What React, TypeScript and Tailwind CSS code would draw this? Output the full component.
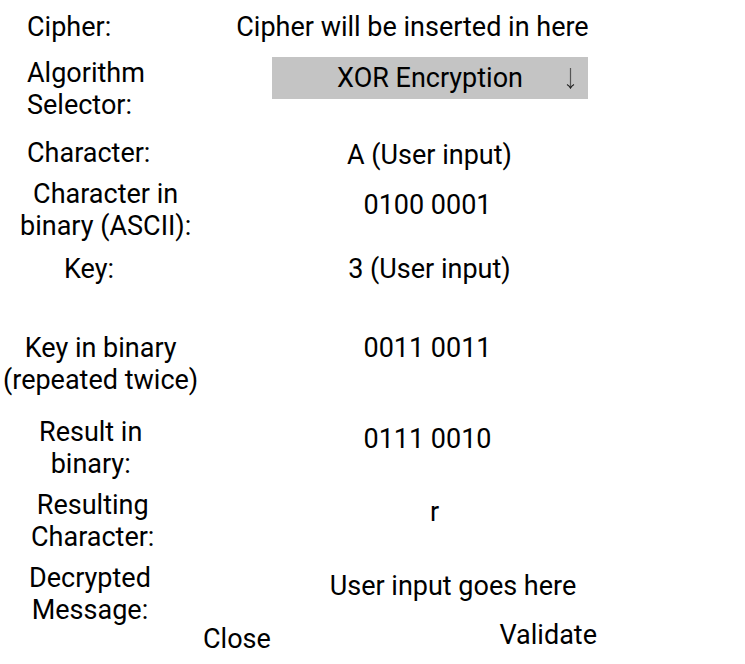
import { useState, type ReactNode } from 'react';

type RowProps = {
  id: string;
  label: string;
  labelClass?: string;
  className?: string;
  valueClass?: string;
  children: ReactNode;
};

function Row({ id, label, labelClass = '', className = '', valueClass = 'pr-[90px]', children }: RowProps) {
  return (
    <div className={`flex items-start ${className}`}>
      <div className="flex w-[200px] shrink-0">
        <label htmlFor={id} className={`whitespace-pre-line ${labelClass}`}>
          {label}
        </label>
      </div>
      <div className={`flex min-w-0 flex-1 justify-center ${valueClass}`}>{children}</div>
    </div>
  );
}

const field = 'block h-8 w-[300px] bg-transparent p-0 text-center leading-8 outline-none';

export default function App() {
  const [algorithm, setAlgorithm] = useState('XOR Encryption');
  const [character, setCharacter] = useState('A (User input)');
  const [key, setKey] = useState('3 (User input)');
  const [message, setMessage] = useState('User input goes here');

  return (
    <form
      className="bg-white pt-[11px] font-['Roboto',sans-serif] text-[27px] leading-8 text-black"
      onSubmit={(e) => e.preventDefault()}
    >
      <Row id="cipher" label="Cipher:" labelClass="pl-[27px]" valueClass="pr-[120px]">
        <output id="cipher" className="whitespace-nowrap">Cipher will be inserted in here</output>
      </Row>

      <Row
        id="algorithm"
        label={'Algorithm\nSelector:'}
        labelClass="pl-[27px]"
        className="mt-3.5"
        valueClass="pr-[85px]"
      >
        <div className="relative w-[316px]">
          <select
            id="algorithm"
            value={algorithm}
            onChange={(e) => setAlgorithm(e.target.value)}
            className="block h-[42px] w-full appearance-none bg-[#c4c4c4] p-0 text-center [text-align-last:center] outline-none"
          >
            <option>XOR Encryption</option>
          </select>
          <svg
            className="pointer-events-none absolute top-[11px] right-3 h-[21px] w-[10px]"
            viewBox="0 0 10 21"
            fill="none"
            stroke="#555"
            aria-hidden="true"
          >
            <path d="M4.5 0V20" strokeWidth="1.2" />
            <path d="M1 16.5C2.5 17.3 3.8 18.5 4.5 20C5.2 18.5 6.5 17.3 8 16.5" stroke="#222" strokeWidth="1.2" />
          </svg>
        </div>
      </Row>

      <Row
        id="character"
        label="Character:"
        labelClass="pl-[27px]"
        className="mt-4"
        valueClass="pr-[86px]"
      >
        <input
          id="character"
          value={character}
          onChange={(e) => setCharacter(e.target.value)}
          className={`${field} mt-0.5`}
        />
      </Row>

      <Row
        id="character-binary"
        label={'Character in\nbinary (ASCII):'}
        labelClass="pl-5 text-center"
        className="mt-[7px]"
      >
        <output id="character-binary" className="mt-[11px]">0100 0001</output>
      </Row>

      <Row id="key" label="Key:" labelClass="pl-16" className="mt-[11px]" valueClass="pr-[86px]">
        <input id="key" value={key} onChange={(e) => setKey(e.target.value)} className={field} />
      </Row>

      <Row
        id="key-binary"
        label={'Key in binary\n(repeated twice)'}
        labelClass="pl-[3px] text-center"
        className="mt-[47px]"
      >
        <output id="key-binary">0011 0011</output>
      </Row>

      <Row
        id="result-binary"
        label={'Result in\nbinary:'}
        labelClass="pl-[39px] text-center"
        className="mt-5"
      >
        <output id="result-binary" className="mt-[7px]">0111 0010</output>
      </Row>

      <Row
        id="result-character"
        label={'Resulting\nCharacter:'}
        labelClass="pl-[31px] text-center"
        className="mt-[9px]"
        valueClass="pr-[76px]"
      >
        <output id="result-character" className="mt-[7px]">r</output>
      </Row>

      <Row
        id="message"
        label={'Decrypted\nMessage:'}
        labelClass="pl-[29px] text-center"
        className="mt-[9px]"
        valueClass="pr-[39px]"
      >
        <input
          id="message"
          value={message}
          onChange={(e) => setMessage(e.target.value)}
          className={`${field} mt-2`}
        />
      </Row>

      <div className="-mt-[7px] flex items-start justify-between pr-[148px] pl-[203px]">
        <button type="button" className="mt-1">Close</button>
        <button type="submit">Validate</button>
      </div>
    </form>
  );
}
